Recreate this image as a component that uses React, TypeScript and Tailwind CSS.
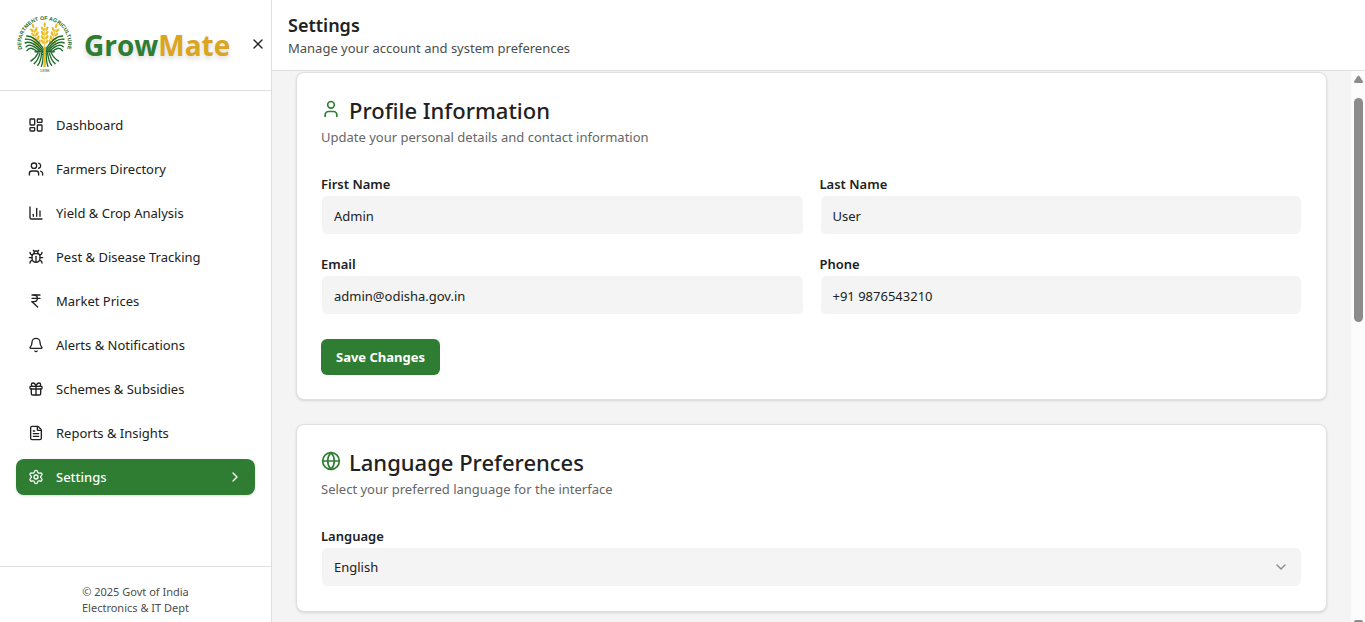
import type { ReactNode } from "react";
import {
  Bell,
  Bug,
  ChartColumn,
  ChevronDown,
  ChevronRight,
  FileText,
  Gift,
  Globe,
  IndianRupee,
  LayoutDashboard,
  Settings,
  User,
  Users,
  X,
  type LucideIcon,
} from "lucide-react";

const GREEN = "#1f6b2a";
const GOLD = "#e8bc22";

function WheatHead({ transform }: { transform: string }) {
  const rows = [0, 13, 26, 39];
  return (
    <g transform={transform} fill={GOLD}>
      <ellipse cx="0" cy="-36" rx="3.5" ry="7" />
      {rows.map((y) => (
        <g key={y}>
          <ellipse cx="-6.5" cy={y - 24} rx="3.6" ry="7.5" transform={`rotate(-32 -6.5 ${y - 24})`} />
          <ellipse cx="6.5" cy={y - 24} rx="3.6" ry="7.5" transform={`rotate(32 6.5 ${y - 24})`} />
        </g>
      ))}
      <path d="M0 -26V42" stroke={GOLD} strokeWidth="2.5" />
    </g>
  );
}

function HalfSheaf() {
  return (
    <g fill="none" stroke={GREEN} strokeWidth="4.4" strokeLinecap="round">
      <path d="M24 60C44 60 64 76 82 101" />
      <path d="M20 70C42 66 60 82 80 105" />
      <path d="M19 81C37 73 56 87 75 106" />
      <path d="M22 92C34 81 52 92 68 106" />
      <path d="M25 104C34 92 48 97 60 108" />
      <path d="M52 107H84" />
      <path d="M62 111C56 122 48 130 38 135" />
      <path d="M68 112C64 126 58 136 49 143" />
      <path d="M74 112C72 128 68 140 61 148" />
      <path d="M79 112C79 130 77 142 73 151" />
      <path d="M60 102L92 116" strokeWidth="3" />
    </g>
  );
}

function Emblem() {
  return (
    <svg viewBox="0 0 168 168" className="size-14 shrink-0 overflow-visible" role="img" aria-label="Department of Agriculture">
      <path id="ring" d="M24 114A70 70 0 1 1 148 114" fill="none" />
      <text fill={GREEN} fontSize="16" fontWeight="700" fontFamily="Liberation Sans, sans-serif" textAnchor="middle">
        <textPath href="#ring" startOffset="50%">
          DEPARTMENT OF AGRICULTURE
        </textPath>
      </text>
      <WheatHead transform="translate(60 65) rotate(-14)" />
      <WheatHead transform="translate(112 65) rotate(14)" />
      <WheatHead transform="translate(86 62)" />
      <g transform="translate(86 106) scale(.9 1) translate(-84 -106)">
        <HalfSheaf />
      </g>
      <g transform="translate(86 106) scale(-.9 1) translate(-84 -106)">
        <HalfSheaf />
      </g>
      <path d="M86 92V153" stroke={GOLD} strokeWidth="7" />
      <text x="86" y="168" fill={GREEN} fontSize="13" fontFamily="Liberation Sans, sans-serif" textAnchor="middle">
        1898
      </text>
    </svg>
  );
}

const navItems: { label: string; icon: LucideIcon; active?: boolean }[] = [
  { label: "Dashboard", icon: LayoutDashboard },
  { label: "Farmers Directory", icon: Users },
  { label: "Yield & Crop Analysis", icon: ChartColumn },
  { label: "Pest & Disease Tracking", icon: Bug },
  { label: "Market Prices", icon: IndianRupee },
  { label: "Alerts & Notifications", icon: Bell },
  { label: "Schemes & Subsidies", icon: Gift },
  { label: "Reports & Insights", icon: FileText },
  { label: "Settings", icon: Settings, active: true },
];

function Sidebar() {
  return (
    <aside className="flex w-[272px] shrink-0 flex-col border-r border-[#dedede] bg-white">
      <div className="flex items-center border-b border-[#dedede] pt-4 pr-[5px] pb-[18px] pl-4">
        <Emblem />
        <span className="ml-3 pt-0.5 font-['Open_Sans','Noto_Sans',sans-serif] text-[28px] leading-9 font-bold text-[#2e7d32] [text-shadow:0_3px_5px_rgba(0,0,0,0.15)]">
          Grow<span className="text-[#daa520]">Mate</span>
        </span>
        <button type="button" aria-label="Close menu" className="ml-auto">
          <X className="size-4" />
        </button>
      </div>
      <nav className="flex-1 p-4">
        <ul className="space-y-2">
          {navItems.map(({ label, icon: Icon, active }) => (
            <li key={label}>
              <a
                href="#"
                className={
                  active
                    ? "flex h-9 items-center gap-3 rounded-lg bg-[#2e7d32] px-3 font-medium text-white shadow-sm"
                    : "flex h-9 items-center gap-3 rounded-lg px-3"
                }
              >
                <Icon className="size-4" />
                <span className="pt-0.5">{label}</span>
                {active && <ChevronRight className="ml-auto size-4" />}
              </a>
            </li>
          ))}
        </ul>
      </nav>
      <footer className="border-t border-[#dedede] px-4 pt-[17px] pb-1.5 text-center text-[11px] leading-4 text-[#4d4d4d]">
        <p>© 2025 Govt of India</p>
        <p>Electronics &amp; IT Dept</p>
      </footer>
    </aside>
  );
}

function Card({ icon: Icon, title, description, children }: { icon: LucideIcon; title: string; description: string; children: ReactNode }) {
  return (
    <section className="rounded-lg border border-[#dfdfdf] bg-white p-6 shadow-sm">
      <div className="flex items-start gap-2">
        <Icon className="mt-0.5 size-5 text-[#2e7d32]" />
        <h2 className="text-[22px] leading-[26px] font-medium">{title}</h2>
      </div>
      <p className="mt-1 leading-5 text-[#666666]">{description}</p>
      <div className="pt-6">{children}</div>
    </section>
  );
}

function Field({ id, label, type, value }: { id: string; label: string; type: string; value: string }) {
  return (
    <div>
      <label htmlFor={id} className="block pt-0.5 leading-[22px] font-semibold">
        {label}
      </label>
      <input
        id={id}
        type={type}
        defaultValue={value}
        className="block h-10 w-full rounded-md border border-white bg-[#f4f4f4] bg-clip-padding px-3 pt-0.5"
      />
    </div>
  );
}

function ScrollRail() {
  return (
    <div aria-hidden="true" className="flex w-3.5 shrink-0 flex-col items-center overflow-hidden bg-[#fcfcfc] pt-1 pl-px">
      <svg viewBox="0 0 9 8" className="h-2 w-[9px] shrink-0 fill-[#8b8b8b]">
        <path d="M3.7 1Q4.5 0 5.3 1L8.7 6Q9.4 8 8 8H1Q-.4 8 .3 6Z" />
      </svg>
      <div className="w-full flex-1 pt-[15px] pl-0.5">
        <div className="h-[43%] w-[9px] rounded-full bg-[#8b8b8b]" />
      </div>
      <div className="h-0.5 w-[9px] rounded-t-sm bg-[#8b8b8b]" />
    </div>
  );
}

export default function App() {
  return (
    <div className="flex h-screen overflow-hidden bg-[#f4f4f4] font-['Noto_Sans','Open_Sans',sans-serif] text-[13px] text-[#212121]">
      <Sidebar />
      <div className="flex min-w-0 flex-1 flex-col">
        <header className="border-b border-[#dedede] bg-white px-4 py-3">
          <h1 className="text-lg leading-[26px] font-semibold">Settings</h1>
          <p className="leading-5 text-[#4d4d4d]">Manage your account and system preferences</p>
        </header>
        <div className="flex min-h-0 flex-1">
          <main className="min-w-0 flex-1 space-y-6 overflow-hidden px-6 pt-px">
            <Card icon={User} title="Profile Information" description="Update your personal details and contact information">
              <form onSubmit={(e) => e.preventDefault()}>
                <div className="grid grid-cols-2 gap-4">
                  <Field id="first-name" label="First Name" type="text" value="Admin" />
                  <Field id="last-name" label="Last Name" type="text" value="User" />
                  <Field id="email" label="Email" type="email" value="admin@odisha.gov.in" />
                  <Field id="phone" label="Phone" type="tel" value="+91 9876543210" />
                </div>
                <button type="submit" className="mt-6 h-9 rounded-md bg-[#2e7d32] px-[15px] pt-0.5 font-bold text-white">
                  Save Changes
                </button>
              </form>
            </Card>
            <Card icon={Globe} title="Language Preferences" description="Select your preferred language for the interface">
              <label htmlFor="language" className="block pt-0.5 leading-[22px] font-semibold">
                Language
              </label>
              <div className="relative">
                <select
                  id="language"
                  defaultValue="English"
                  className="block h-10 w-full appearance-none rounded-md border border-white bg-[#f4f4f4] bg-clip-padding px-3 pt-0.5"
                >
                  <option>English</option>
                  <option>Hindi</option>
                  <option>Odia</option>
                </select>
                <ChevronDown className="pointer-events-none absolute top-3 right-[13px] size-4 text-[#8a8a8a]" />
              </div>
            </Card>
          </main>
          <ScrollRail />
        </div>
      </div>
    </div>
  );
}
